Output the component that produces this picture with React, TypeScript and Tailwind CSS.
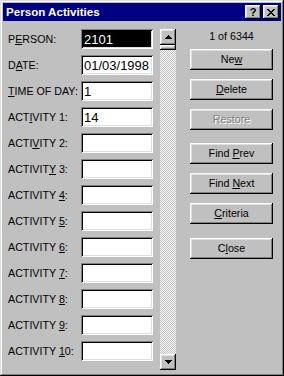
import type { ReactNode } from "react";

const FONT = { fontFamily: '"Liberation Sans", Arial, sans-serif' };

const raised =
    "shadow-[inset_-1px_-1px_#000000,inset_1px_1px_#ffffff,inset_-2px_-2px_#808080,inset_2px_2px_#dfdfdf]";

interface Row {
    label: ReactNode;
    value: string;
    selected?: boolean;
}

const ROWS: Row[] = [
    { label: <>P<u>E</u>RSON:</>, value: "2101", selected: true },
    { label: <>D<u>A</u>TE:</>, value: "01/03/1998" },
    { label: <><u>T</u>IME OF DAY:</>, value: "1" },
    { label: <>ACT<u>I</u>VITY 1:</>, value: "14" },
    { label: <>ACTI<u>V</u>ITY 2:</>, value: "" },
    { label: <>ACTIVIT<u>Y</u> 3:</>, value: "" },
    { label: <>ACTIVITY <u>4</u>:</>, value: "" },
    { label: <>ACTIVITY <u>5</u>:</>, value: "" },
    { label: <>ACTIVITY <u>6</u>:</>, value: "" },
    { label: <>ACTIVITY <u>7</u>:</>, value: "" },
    { label: <>ACTIVITY <u>8</u>:</>, value: "" },
    { label: <>ACTIVITY <u>9</u>:</>, value: "" },
    { label: <>ACTIVITY <u>1</u>0:</>, value: "" },
];

const Field = ({ row }: { row: Row }) => (
    <div className="flex h-[20px] items-center">
        <span className="w-[73px] whitespace-nowrap text-[10.7px] leading-none text-black">{row.label}</span>
        <div
            className={`flex h-[20px] w-[72px] items-center pl-[3px] text-[13px] leading-none shadow-[inset_1px_1px_#808080,inset_-1px_-1px_#ffffff,inset_2px_2px_#000000,inset_-2px_-2px_#dfdfdf] ${
                row.selected ? "bg-black text-white" : "bg-white text-black"
            }`}
        >
            {row.value}
        </div>
    </div>
);

const Arrow = ({ down }: { down?: boolean }) => (
    <div className={`flex h-[16px] w-[16px] shrink-0 items-center justify-center bg-[#c0c0c0] ${raised}`}>
        <svg width="7" height="4" viewBox="0 0 7 4" shapeRendering="crispEdges" className={down ? "rotate-180" : ""}>
            <rect x="3" y="0" width="1" height="1" fill="#000" />
            <rect x="2" y="1" width="3" height="1" fill="#000" />
            <rect x="1" y="2" width="5" height="1" fill="#000" />
            <rect x="0" y="3" width="7" height="1" fill="#000" />
        </svg>
    </div>
);

const Btn = ({ children, disabled, className = "" }: { children: ReactNode; disabled?: boolean; className?: string }) => (
    <div
        className={`flex h-[21px] w-[83px] items-center justify-center bg-[#c0c0c0] text-[10.7px] leading-none ${raised} ${
            disabled ? "text-[#808080] [text-shadow:1px_1px_0_#ffffff]" : "text-black"
        } ${className}`}
    >
        <span className="whitespace-nowrap">{children}</span>
    </div>
);

export default function App() {
    return (
        <div
            style={FONT}
            className="flex h-[376px] w-[284px] flex-col bg-[#c0c0c0] p-[3px] shadow-[inset_-1px_-1px_#000000,inset_1px_1px_#dfdfdf,inset_-2px_-2px_#808080,inset_2px_2px_#ffffff]"
        >
            <div className="flex h-[18px] items-center bg-[#000080] pl-[3px] pr-[2px]">
                <span className="flex-1 text-[11.6px] font-bold leading-none text-white">Person Activities</span>
                <div className={`flex h-[14px] w-[16px] items-center justify-center bg-[#c0c0c0] ${raised}`}>
                    <span className="text-[11px] font-bold leading-none text-black">?</span>
                </div>
                <div className={`ml-[2px] flex h-[14px] w-[16px] items-center justify-center bg-[#c0c0c0] ${raised}`}>
                    <svg width="8" height="7" viewBox="0 0 8 7" shapeRendering="crispEdges">
                        <path
                            d="M0 0h2v1H0zM6 0h2v1H6zM1 1h2v1H1zM5 1h2v1H5zM2 2h4v1H2zM3 3h2v1H3zM2 4h4v1H2zM1 5h2v1H1zM5 5h2v1H5zM0 6h2v1H0zM6 6h2v1H6z"
                            fill="#000"
                        />
                    </svg>
                </div>
            </div>

            <div className="flex pl-[5px] pt-[8px]">
                <div className="flex flex-col gap-[6px]">
                    {ROWS.map((row, i) => (
                        <Field key={i} row={row} />
                    ))}
                </div>

                <div className="ml-[7px] flex h-[341px] w-[16px] flex-col [background-image:repeating-conic-gradient(#c0c0c0_0%_25%,#ffffff_0%_50%)] [background-size:2px_2px]">
                    <Arrow />
                    <div className={`h-[5px] w-[16px] bg-[#c0c0c0] ${raised}`} />
                    <div className="flex-1" />
                    <Arrow down />
                </div>

                <div className="ml-[14px] flex w-[83px] flex-col">
                    <div className="h-[14px] text-center text-[10.7px] leading-[14px] text-black">1 of 6344</div>
                    <Btn className="mt-[6px]">
                        Ne<u>w</u>
                    </Btn>
                    <Btn className="mt-[9px]">
                        <u>D</u>elete
                    </Btn>
                    <Btn className="mt-[9px]" disabled>
                        Restore
                    </Btn>
                    <Btn className="mt-[13px]">
                        Find <u>P</u>rev
                    </Btn>
                    <Btn className="mt-[9px]">
                        Find <u>N</u>ext
                    </Btn>
                    <Btn className="mt-[9px]">
                        <u>C</u>riteria
                    </Btn>
                    <Btn className="mt-[14px]">
                        C<u>l</u>ose
                    </Btn>
                </div>
            </div>
        </div>
    );
}
